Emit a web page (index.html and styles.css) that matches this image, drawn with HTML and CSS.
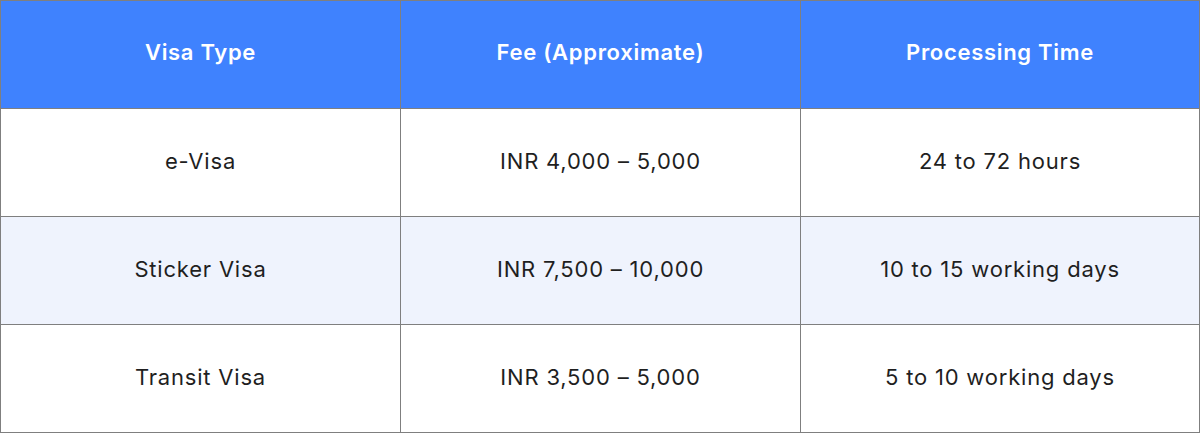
FILE: index.html
```html
<!DOCTYPE html>
<html>
<head>
<meta charset="utf-8">
<link rel="stylesheet" href="styles.css">
</head>
<body>
<div class="table">
  <div class="cell head">Visa Type</div>
  <div class="cell head">Fee (Approximate)</div>
  <div class="cell head">Processing Time</div>

  <div class="cell">e-Visa</div>
  <div class="cell">INR 4,000 – 5,000</div>
  <div class="cell">24 to 72 hours</div>

  <div class="cell alt">Sticker Visa</div>
  <div class="cell alt">INR 7,500 – 10,000</div>
  <div class="cell alt">10 to 15 working days</div>

  <div class="cell">Transit Visa</div>
  <div class="cell">INR 3,500 – 5,000</div>
  <div class="cell">5 to 10 working days</div>
</div>
</body>
</html>
```
FILE: styles.css
```css
html, body {
  margin: 0;
  padding: 0;
  background: #ffffff;
}
.table {
  display: grid;
  grid-template-columns: 399px 399px 398px;
  grid-template-rows: repeat(4, 107px);
  gap: 1px;
  padding: 1px;
  width: 1200px;
  box-sizing: border-box;
  background: #7f7f7f;
  font-family: Inter, "Noto Sans", sans-serif;
}
.cell {
  display: flex;
  align-items: center;
  justify-content: center;
  padding-bottom: 3px;
  box-sizing: border-box;
  background: #ffffff;
  color: #1f1f1f;
  font-size: 22px;
  letter-spacing: 0.8px;
  font-weight: 400;
}
.cell.alt {
  background: #eff3fd;
}
.cell.head {
  background: #3f82fe;
  color: #ffffff;
  font-weight: 600;
  font-size: 22px;
  letter-spacing: 0.7px;
  padding-bottom: 5px;
}
```
